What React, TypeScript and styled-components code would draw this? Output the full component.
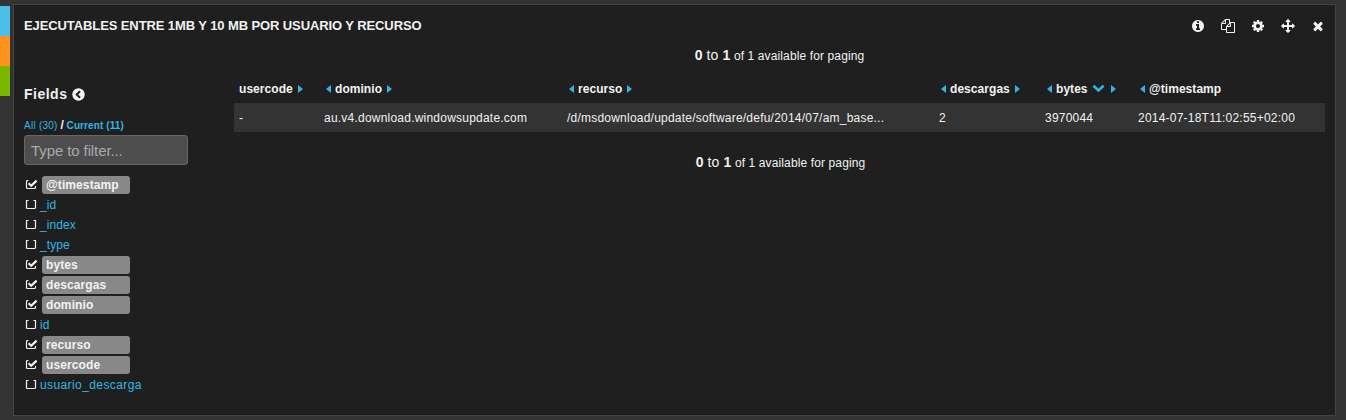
import React from "react";
import styled, { createGlobalStyle, css } from "styled-components";

const Global = createGlobalStyle`
  * { box-sizing: border-box; }
  html, body { margin: 0; padding: 0; }
  body {
    background: #333;
    color: #f2f2f2;
    font: 12px/20px "Liberation Sans", Arial, sans-serif;
    overflow: hidden;
  }
`;

const Page = styled.div`
  display: flex;
  width: 1348px;
  height: 420px;
  border-right: 2px solid #fff;
`;
const Strips = styled.div`
  width: 13px;
  padding-top: 6px;
`;
const Strip = styled.div<{ $color: string }>`
  width: 10px;
  height: 30px;
  background: ${(p) => p.$color};
`;
const Panel = styled.section`
  width: 1323px;
  height: 412px;
  margin-top: 4px;
  border: 1px solid #444;
  background: #1f1f1f;
  padding: 0 10px;
`;
const Header = styled.header`
  display: flex;
  justify-content: space-between;
  align-items: center;
  height: 40px;
`;
const Title = styled.h1`
  margin: 0;
  padding-top: 2px;
  font-size: 13px;
  font-weight: bold;
  white-space: nowrap;
  letter-spacing: -0.1px;
`;
const Tools = styled.div`
  display: flex;
  gap: 16px;
  margin-right: 0.5px;
  padding-top: 1px;
`;
const Svg = styled.svg`
  display: block;
  flex: none;
  fill: currentColor;
`;
const Body = styled.div`
  display: flex;
`;
const Sidebar = styled.aside`
  width: 210px;
  padding-top: 39px;
`;
const FieldsTitle = styled.div`
  display: flex;
  align-items: center;
  gap: 5px;
  height: 20px;
  font-size: 14px;
  font-weight: bold;
  letter-spacing: 0.5px;
`;
const Scope = styled.div`
  height: 20px;
  margin-top: 11px;
  font-size: 10px;
  white-space: nowrap;
`;
const Link = styled.a<{ $bold?: boolean }>`
  color: #33b5e5;
  font-weight: ${(p) => (p.$bold ? "bold" : "normal")};
  letter-spacing: ${(p) => (p.$bold ? 0.1 : 0.25)}px;
`;
const Slash = styled.b`
  font-size: 12px;
`;
const Filter = styled.input`
  display: block;
  width: 164px;
  height: 30px;
  padding: 0 6px;
  border: 1px solid #666;
  border-radius: 3px;
  background: #4d4d4d;
  font: 15px "Liberation Sans", Arial, sans-serif;
  letter-spacing: -0.1px;
  &::placeholder { color: #aaa; opacity: 1; }
`;
const FieldList = styled.ul`
  margin: 10px 0 0;
  padding: 0;
  list-style: none;
`;
const Field = styled.li`
  display: flex;
  align-items: center;
  height: 20px;
  padding-left: 1px;
`;
const FieldName = styled.span<{ $on: boolean; $long: boolean }>`
  line-height: 18px;
  letter-spacing: ${(p) => (p.$long ? 0.4 : 0.1)}px;
  ${(p) =>
    p.$on
      ? css`
          width: 88px;
          height: 18px;
          margin-left: 4px;
          padding-left: 4px;
          border-radius: 3px;
          background: #888;
          font-weight: bold;
        `
      : css`
          margin-left: 2px;
          color: #33b5e5;
        `}
`;
const Main = styled.main`
  width: 1091px;
`;
const Paging = styled.div<{ $shift?: number }>`
  height: 20px;
  padding-left: ${(p) => p.$shift ?? 0}px;
  text-align: center;
  letter-spacing: 0.12px;
  big { font-size: 14px; }
`;
const Table = styled.div`
  margin: 9px 0 20px;
`;
const Row = styled.div<{ $striped?: boolean }>`
  display: grid;
  grid-template-columns: 85px 243px 372px 106px 93px 192px;
  align-items: center;
  height: 29px;
  background: ${(p) => (p.$striped ? "#333" : "transparent")};
`;
const Cell = styled.div`
  padding-left: 5px;
  letter-spacing: 0.22px;
  white-space: nowrap;
`;
const Head = styled(Cell)`
  display: flex;
  align-items: center;
  font-weight: bold;
  letter-spacing: 0.05px;
`;
const Caret = styled.i<{ $dir: "left" | "right" }>`
  border: solid transparent;
  border-width: 4px 0;
  ${(p) =>
    p.$dir === "left"
      ? css`border-right: 5px solid #33b5e5; margin: 0 4px 0 2px;`
      : css`border-left: 5px solid #33b5e5; margin-left: 5px;`}
`;

const icons = {
  info: "M1152 1376v-160q0-14-9-23t-23-9h-96v-512q0-14-9-23t-23-9h-320q-14 0-23 9t-9 23v160q0 14 9 23t23 9h96v320h-96q-14 0-23 9t-9 23v160q0 14 9 23t23 9h448q14 0 23-9t9-23zm-128-896v-160q0-14-9-23t-23-9h-192q-14 0-23 9t-9 23v160q0 14 9 23t23 9h192q14 0 23-9t9-23zm640 416q0 209-103 385.500t-279.500 279.500-385.500 103-385.500-103-279.500-279.500-103-385.500 103-385.500 279.500-279.500 385.500-103 385.500 103 279.500 279.500 103 385.500z",
  copy: "M1696 384q40 0 68 28t28 68v1216q0 40-28 68t-68 28h-960q-40 0-68-28t-28-68v-288h-544q-40 0-68-28t-28-68v-672q0-40 20-88t48-76l408-408q28-28 76-48t88-20h416q40 0 68 28t28 68v328q68-40 128-40h416zm-544 213l-299 299h299v-299zm-640-384l-299 299h299v-299zm196 647l316-316v-416h-384v416q0 40-28 68t-68 28h-416v640h512v-256q0-40 20-88t48-76zm956 804v-1152h-384v416q0 40-28 68t-68 28h-416v640h896z",
  cog: "M1152 896q0-106-75-181t-181-75-181 75-75 181 75 181 181 75 181-75 75-181zm512-109v222q0 12-8 23t-20 13l-185 28q-19 54-39 91 35 50 107 138 10 12 10 25t-9 23q-27 37-99 108t-94 71q-12 0-26-9l-138-108q-44 23-91 38-16 136-29 186-7 28-36 28h-222q-14 0-24.500-8.500t-11.500-21.500l-28-184q-49-16-90-37l-141 107q-10 9-25 9-14 0-25-11-126-114-165-168-7-10-7-23 0-12 8-23 15-21 51-66.500t54-70.500q-27-50-41-99l-183-27q-13-2-21-12.500t-8-23.500v-222q0-12 8-23t19-13l186-28q14-46 39-92-40-57-107-138-10-12-10-24 0-10 9-23 26-36 98.500-107.500t94.500-71.500q13 0 26 10l138 107q44-23 91-38 16-136 29-186 7-28 36-28h222q14 0 24.500 8.500t11.500 21.500l28 184q49 16 90 37l142-107q9-9 24-9 13 0 25 10 129 119 165 170 7 8 7 22 0 12-8 23-15 21-51 66.500t-54 70.500q26 50 41 98l183 28q13 2 21 12.500t8 23.500z",
  move: "M1792 896q0 26-19 45l-256 256q-19 19-45 19t-45-19-19-45v-128h-384v384h128q26 0 45 19t19 45-19 45l-256 256q-19 19-45 19t-45-19l-256-256q-19-19-19-45t19-45 45-19h128v-384h-384v128q0 26-19 45t-45 19-45-19l-256-256q-19-19-19-45t19-45l256-256q19-19 45-19t45 19 19 45v128h384v-384h-128q-26 0-45-19t-19-45 19-45l256-256q19-19 45-19t45 19l256 256q19 19 19 45t-19 45-45 19h-128v384h384v-128q0-26 19-45t45-19 45 19l256 256q19 19 19 45z",
  close: "M1490 1322q0 40-28 68l-136 136q-28 28-68 28t-68-28l-294-294-294 294q-28 28-68 28t-68-28l-136-136q-28-28-28-68t28-68l294-294-294-294q-28-28-28-68t28-68l136-136q28-28 68-28t68 28l294 294 294-294q28-28 68-28t68 28l136 136q28 28 28 68t-28 68l-294 294 294 294q28 28 28 68z",
};

const Icon = ({ name }: { name: keyof typeof icons }) => (
  <Svg width="14" height="14" viewBox="0 0 1792 1792"><path d={icons[name]} /></Svg>
);

const Check = ({ on }: { on: boolean }) => (
  <Svg width="13" height="12" viewBox="0 0 13 12">
    {on ? (
      <g fill="none" stroke="currentColor">
        <path d="M3.500 1.500H2.500Q1.500 1.500 1.500 2.500V8.500Q1.500 9.500 2.500 9.500H9.500Q10.500 9.500 10.500 8.500V7" strokeWidth="1.200" />
        <path d="M3.600 4.200L6.200 6.800L11.600 1.600" strokeWidth="2.200" />
      </g>
    ) : (
      <path d="M3.500 1.500H1.500V8.500Q1.500 9.500 2.500 9.500H9.500Q10.500 9.500 10.500 8.500V1.500H8.500" fill="none" stroke="currentColor" strokeWidth="1.200" />
    )}
  </Svg>
);

const fields: [string, boolean][] = [
  ["@timestamp", true], ["_id", false], ["_index", false], ["_type", false],
  ["bytes", true], ["descargas", true], ["dominio", true], ["id", false],
  ["recurso", true], ["usercode", true], ["usuario_descarga", false],
];
const columns = ["usercode", "dominio", "recurso", "descargas", "bytes", "@timestamp"];
const values = [
  "-", "au.v4.download.windowsupdate.com",
  "/d/msdownload/update/software/defu/2014/07/am_base...",
  "2", "3970044", "2014-07-18T11:02:55+02:00",
];

const SortArrow = styled(Svg)`
  color: #33b5e5;
  margin: 0 1px 0 4px;
`;

const PagingText = ({ shift }: { shift?: number }) => (
  <Paging $shift={shift}>
    <big><b>0</b> to <b>1</b></big> of 1 available for paging
  </Paging>
);

export default function App() {
  return (
    <Page>
      <Global />
      <Strips>
        {["#4bbfec", "#ff931e", "#7ab800"].map((c) => <Strip key={c} $color={c} />)}
      </Strips>
      <Panel>
        <Header>
          <Title>EJECUTABLES ENTRE 1MB Y 10 MB POR USUARIO Y RECURSO</Title>
          <Tools>
            <Icon name="info" /><Icon name="copy" /><Icon name="cog" /><Icon name="move" /><Icon name="close" />
          </Tools>
        </Header>
        <Body>
          <Sidebar>
            <FieldsTitle>
              Fields
              <Svg width="13" height="13" viewBox="0 0 13 13">
                <circle cx="6.500" cy="6.500" r="6.200" />
                <path d="M8 3.200L4.700 6.500L8 9.800" fill="none" stroke="#1f1f1f" strokeWidth="2" />
              </Svg>
            </FieldsTitle>
            <Scope><Link>All (30)</Link> <Slash>/</Slash> <Link $bold>Current (11)</Link></Scope>
            <Filter placeholder="Type to filter..." />
            <FieldList>
              {fields.map(([name, on]) => (
                <Field key={name}>
                  <Check on={on} />
                  <FieldName $on={on} $long={name.length > 12}>{name}</FieldName>
                </Field>
              ))}
            </FieldList>
          </Sidebar>
          <Main>
            <PagingText />
            <Table>
              <Row>
                {columns.map((name, i) => (
                  <Head key={name}>
                    {i > 0 && <Caret $dir="left" />}
                    {name}
                    {name === "bytes" && (
                      <SortArrow width="13" height="9" viewBox="0 0 13 9">
                        <path d="M1.500 1.800L6.500 6.500L11.500 1.800" fill="none" stroke="currentColor" strokeWidth="2.600" />
                      </SortArrow>
                    )}
                    {i < columns.length - 1 && <Caret $dir="right" />}
                  </Head>
                ))}
              </Row>
              <Row $striped>{values.map((v) => <Cell key={v}>{v}</Cell>)}</Row>
            </Table>
            <PagingText shift={2} />
          </Main>
        </Body>
      </Panel>
    </Page>
  );
}
